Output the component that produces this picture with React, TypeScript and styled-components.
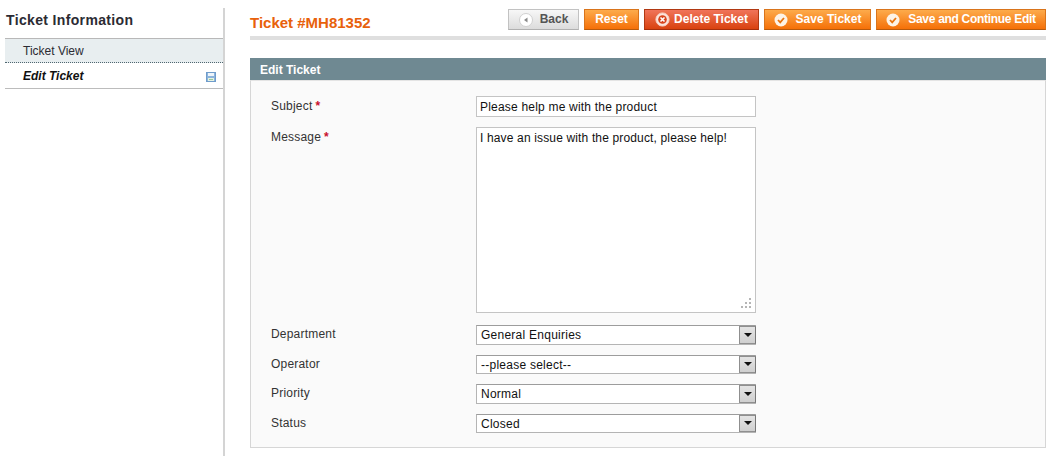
import React from "react";
import styled, { createGlobalStyle } from "styled-components";

const Global = createGlobalStyle`
  html, body { margin: 0; padding: 0; background: #fff; }
  body { font: 12px/15px "Liberation Sans", Arial, sans-serif; color: #2f2f2f; }
  * { box-sizing: border-box; }
`;

const Page = styled.div`
  width: 1055px;
  height: 456px;
  overflow: hidden;
  display: flex;
  align-items: flex-start;
  padding-left: 5px;
`;

const Sidebar = styled.aside`
  width: 220px;
  height: 448px;
  margin-top: 8px;
  border-right: 2px solid #d4d4d4;
  flex: none;
`;

const SideTitle = styled.h3`
  margin: 0;
  height: 30px;
  padding: 4px 0 0 1px;
  font-size: 14px;
  line-height: 16px;
  font-weight: bold;
  letter-spacing: 0.35px;
  color: #2b2b33;
`;

const SideItem = styled.div<{ $active?: boolean }>`
  display: flex;
  align-items: center;
  justify-content: space-between;
  height: ${(p) => (p.$active ? 26 : 25)}px;
  padding: 2px 7px 0 18px;
  color: ${(p) => (p.$active ? "#111" : "#2b2b33")};
  font-weight: ${(p) => (p.$active ? "bold" : "normal")};
  font-style: ${(p) => (p.$active ? "italic" : "normal")};
  background: ${(p) => (p.$active ? "#fff" : "#e8eef0")};
  border-top: ${(p) => (p.$active ? "none" : "1px solid #b8b8b8")};
  border-bottom: ${(p) => (p.$active ? "1px solid #bcbcbc" : "1px dotted #4f6670")};
`;

const Main = styled.main`
  width: 796px;
  margin-left: 25px;
  flex: none;
`;

const Header = styled.header`
  display: flex;
  align-items: flex-start;
  justify-content: space-between;
  height: 40px;
  padding-top: 9px;
  border-bottom: 4px solid #dfdfdf;
`;

const TicketTitle = styled.h3`
  margin: 6px 0 0;
  font-size: 15px;
  line-height: 16px;
  font-weight: bold;
  color: #e8610b;
`;

const Buttons = styled.div`
  display: flex;
  gap: 5px;
`;

const Button = styled.button<{ $kind: "back" | "orange" | "red"; $width: number; $gap: number; $tight?: boolean }>`
  display: flex;
  align-items: center;
  justify-content: center;
  width: ${(p) => p.$width}px;
  gap: ${(p) => p.$gap}px;
  height: 21px;
  padding: 0;
  font: bold 12px/15px "Liberation Sans", Arial, sans-serif;
  letter-spacing: ${(p) => (p.$tight ? "-0.3px" : "0")};
  color: ${(p) => (p.$kind === "back" ? "#555" : "#fff")};
  background: ${(p) =>
    p.$kind === "back"
      ? "linear-gradient(#f7f7f7, #dcdcdc)"
      : p.$kind === "red"
      ? "linear-gradient(#f0745a, #d9420f)"
      : "linear-gradient(#fdab4b, #f57008)"};
  border: 1px solid ${(p) => (p.$kind === "back" ? "#c2c2c2" : p.$kind === "red" ? "#b13812" : "#d9741b")};
  border-bottom-color: ${(p) => (p.$kind === "back" ? "#b0b0b0" : p.$kind === "red" ? "#a52f0c" : "#b85a0c")};
`;

const Section = styled.section`
  margin-top: 18px;
`;

const SectionHead = styled.div`
  height: 22px;
  padding: 1px 10px 0;
  line-height: 22px;
  font-weight: bold;
  color: #fff;
  background: #6f8992;
`;

const Fieldset = styled.div`
  display: flex;
  flex-direction: column;
  height: 368px;
  padding: 15px 0 0 20px;
  background: #fafafa;
  border: 1px solid #d6d6d6;
  border-top-color: #e4e4e4;
`;

const Row = styled.div<{ $after?: number }>`
  display: flex;
  align-items: flex-start;
  margin-bottom: ${(p) => p.$after ?? 0}px;
`;

const Label = styled.label<{ $offset: number }>`
  width: 205px;
  flex: none;
  padding-top: ${(p) => p.$offset}px;
  letter-spacing: 0.2px;
  color: #333;
`;

const Required = styled.span`
  color: #c8102e;
  font-weight: bold;
  margin-left: 3px;
`;

const Input = styled.input`
  display: block;
  width: 280px;
  height: 21px;
  margin: 0;
  padding: 2px 3px;
  font: 12px/15px "Liberation Sans", Arial, sans-serif;
  letter-spacing: 0.2px;
  color: #111;
  background: #fff;
  border: 1px solid #c4c4c4;
  outline: none;
`;

const AreaWrap = styled.div`
  position: relative;
  width: 280px;
  height: 186px;
`;

const TextArea = styled.textarea`
  display: block;
  width: 100%;
  height: 100%;
  margin: 0;
  padding: 3px 3px;
  resize: none;
  font: 12px/15px "Liberation Sans", Arial, sans-serif;
  letter-spacing: 0.15px;
  color: #111;
  background: #fff;
  border: 1px solid #c4c4c4;
  outline: none;
`;

const Grip = styled.svg`
  position: absolute;
  right: 4px;
  bottom: 4px;
`;

const SelectWrap = styled.div`
  position: relative;
  width: 280px;
  height: 19.5px;
`;

const Select = styled.select`
  display: block;
  width: 100%;
  height: 100%;
  margin: 0;
  padding: 2px 20px 0 4px;
  appearance: none;
  border-radius: 0;
  font: 12px/15px "Liberation Sans", Arial, sans-serif;
  letter-spacing: 0.25px;
  color: #111;
  background: #fff;
  border: 1px solid #b4b4b4;
  border-top-color: #9c9c9c;
  outline: none;
`;

const Arrow = styled.span`
  position: absolute;
  top: 1px;
  right: 0;
  bottom: 1px;
  width: 17px;
  display: flex;
  align-items: center;
  justify-content: center;
  background: linear-gradient(#e4e4e4, #cfcfcf);
  border: 1px solid #8f8f8f;
  border-right-color: #777;
`;

const Caret = styled.span`
  width: 0;
  height: 0;
  border-left: 4px solid transparent;
  border-right: 4px solid transparent;
  border-top: 4px solid #111;
`;

const SaveIcon = () => (
  <svg width="10" height="10" viewBox="0 0 10 10">
    <rect x="0.5" y="0.5" width="9" height="9" fill="#8db4dc" stroke="#6f9ccb" />
    <rect x="2" y="1" width="6" height="3" fill="#eef5fb" />
    <rect x="2" y="6" width="6" height="3" fill="#e6f2e2" />
    <rect x="3" y="7" width="4" height="1" fill="#9cc79c" />
  </svg>
);

const BackIcon = () => (
  <svg width="14" height="14" viewBox="0 0 14 14">
    <circle cx="7" cy="7" r="6.5" fill="#fff" stroke="#d0d0d0" />
    <path d="M8.5 4.5v5L5 7z" fill="#8a8a8a" />
  </svg>
);

const CheckIcon = () => (
  <svg width="14" height="14" viewBox="0 0 14 14">
    <circle cx="7" cy="7" r="6.5" fill="#fdf3e6" />
    <path d="M4 7l2.2 2.3L10 5" fill="none" stroke="#e8740e" strokeWidth="1.8" />
  </svg>
);

const CrossIcon = () => (
  <svg width="15" height="15" viewBox="0 0 15 15">
    <circle cx="7.5" cy="7.5" r="6.6" fill="#fbe4dc" stroke="#f6cdbf" />
    <circle cx="7.5" cy="7.5" r="4.3" fill="#d8431c" />
    <path d="M5.5 5.5l4 4M9.5 5.5l-4 4" stroke="#fff" strokeWidth="1.6" />
  </svg>
);

const SelectField = ({ id, label, value, after }: { id: string; label: string; value: string; after?: number }) => (
  <Row $after={after}>
    <Label htmlFor={id} $offset={2}>
      {label}
    </Label>
    <SelectWrap>
      <Select id={id} defaultValue={value}>
        <option>{value}</option>
      </Select>
      <Arrow>
        <Caret />
      </Arrow>
    </SelectWrap>
  </Row>
);

export default function App() {
  return (
    <Page>
      <Global />
      <Sidebar>
        <SideTitle>Ticket Information</SideTitle>
        <SideItem>Ticket View</SideItem>
        <SideItem $active>
          Edit Ticket
          <SaveIcon />
        </SideItem>
      </Sidebar>
      <Main>
        <Header>
          <TicketTitle>Ticket #MH81352</TicketTitle>
          <Buttons>
            <Button $kind="back" $width={71} $gap={7}>
              <BackIcon />
              Back
            </Button>
            <Button $kind="orange" $width={55} $gap={0}>
              Reset
            </Button>
            <Button $kind="red" $width={115} $gap={4}>
              <CrossIcon />
              Delete Ticket
            </Button>
            <Button $kind="orange" $width={107} $gap={8}>
              <CheckIcon />
              Save Ticket
            </Button>
            <Button $kind="orange" $width={170} $gap={8} $tight>
              <CheckIcon />
              Save and Continue Edit
            </Button>
          </Buttons>
        </Header>
        <Section>
          <SectionHead>Edit Ticket</SectionHead>
          <Fieldset>
            <Row $after={10}>
              <Label htmlFor="subject" $offset={3}>
                Subject<Required>*</Required>
              </Label>
              <Input id="subject" defaultValue="Please help me with the product" />
            </Row>
            <Row $after={12}>
              <Label htmlFor="message" $offset={3}>
                Message<Required>*</Required>
              </Label>
              <AreaWrap>
                <TextArea id="message" defaultValue="I have an issue with the product, please help!" />
                <Grip width="11" height="11" viewBox="0 0 11 11">
                  <path d="M8 0h2v2H8zM4 4h2v2H4zM8 4h2v2H8zM0 8h2v2H0zM4 8h2v2H4zM8 8h2v2H8z" fill="#b5b5b5" />
                </Grip>
              </AreaWrap>
            </Row>
            <SelectField id="department" label="Department" value="General Enquiries" after={10} />
            <SelectField id="operator" label="Operator" value="--please select--" after={10} />
            <SelectField id="priority" label="Priority" value="Normal" after={10} />
            <SelectField id="status" label="Status" value="Closed" />
          </Fieldset>
        </Section>
      </Main>
    </Page>
  );
}
